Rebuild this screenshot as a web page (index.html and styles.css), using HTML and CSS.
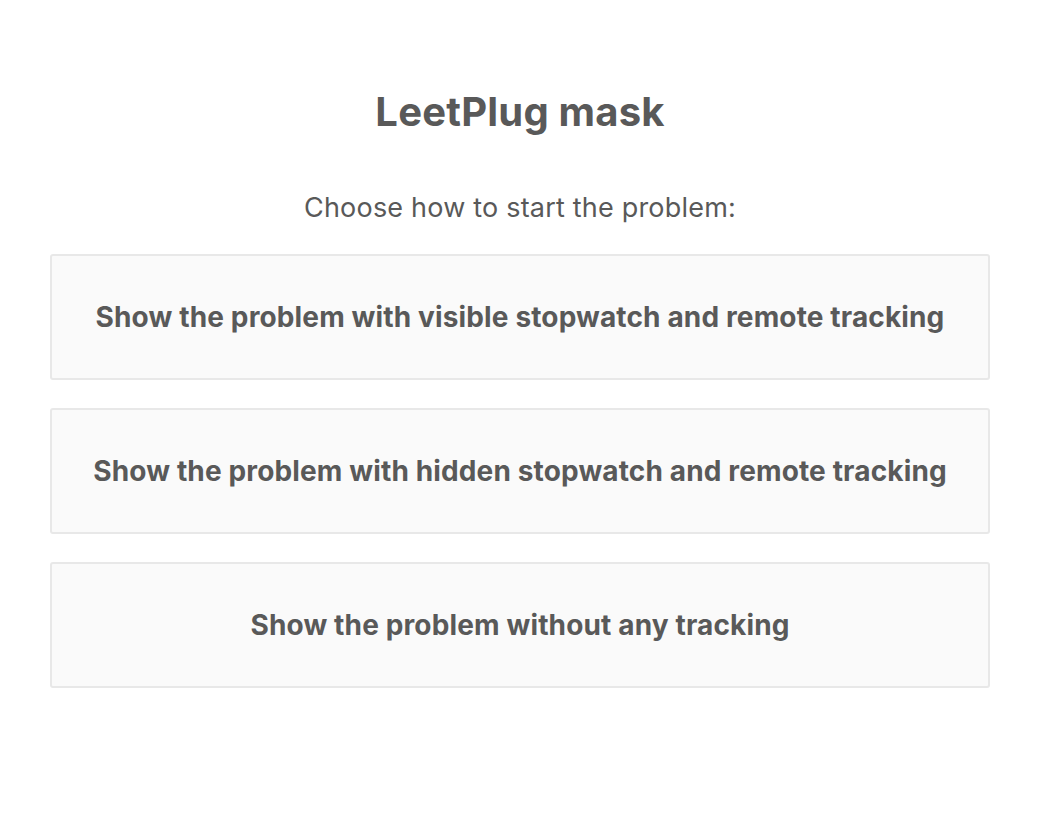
FILE: index.html
```html
<!DOCTYPE html>
<html lang="en">
<head>
    <meta charset="UTF-8">
    <meta name="viewport" content="width=device-width, initial-scale=1.0">
    <title>LeetPlug mask</title>
    <link rel="stylesheet" href="styles.css">
</head>
<body>
    <div id="container">
        <h1 class="title">LeetPlug mask</h1>
        <p class="subtitle">Choose how to start the problem:</p>
        <div class="choices">
            <button class="choice">Show the problem with visible stopwatch and remote tracking</button>
            <button class="choice">Show the problem with hidden stopwatch and remote tracking</button>
            <button class="choice">Show the problem without any tracking</button>
        </div>
    </div>
</body>
</html>
```

FILE: styles.css
```css
body {
    margin: 0;
    font-family: Inter, "Noto Sans", sans-serif;
    color: #595959;
    background-color: #ffffff;
}
#container {
    width: 940px;
    margin-left: 50px;
    padding-top: 84px;
}
.title {
    margin: 0;
    font-size: 40px;
    font-weight: 700;
    letter-spacing: 0.2px;
    line-height: 56px;
    text-align: center;
}
.subtitle {
    margin: 50px 0 0 0;
    font-size: 27px;
    letter-spacing: 0.2px;
    line-height: 36px;
    text-align: center;
}
.choices {
    display: flex;
    flex-direction: column;
    gap: 28px;
    margin-top: 28px;
}
.choice {
    height: 126px;
    background-color: #fafafa;
    border: 2px solid #e8e8e8;
    border-radius: 3px;
    font-family: inherit;
    font-size: 28px;
    font-weight: 700;
    letter-spacing: 0.14px;
    color: #595959;
    cursor: pointer;
}
.choice:hover {
    background-color: #f2f2f2;
}
```
